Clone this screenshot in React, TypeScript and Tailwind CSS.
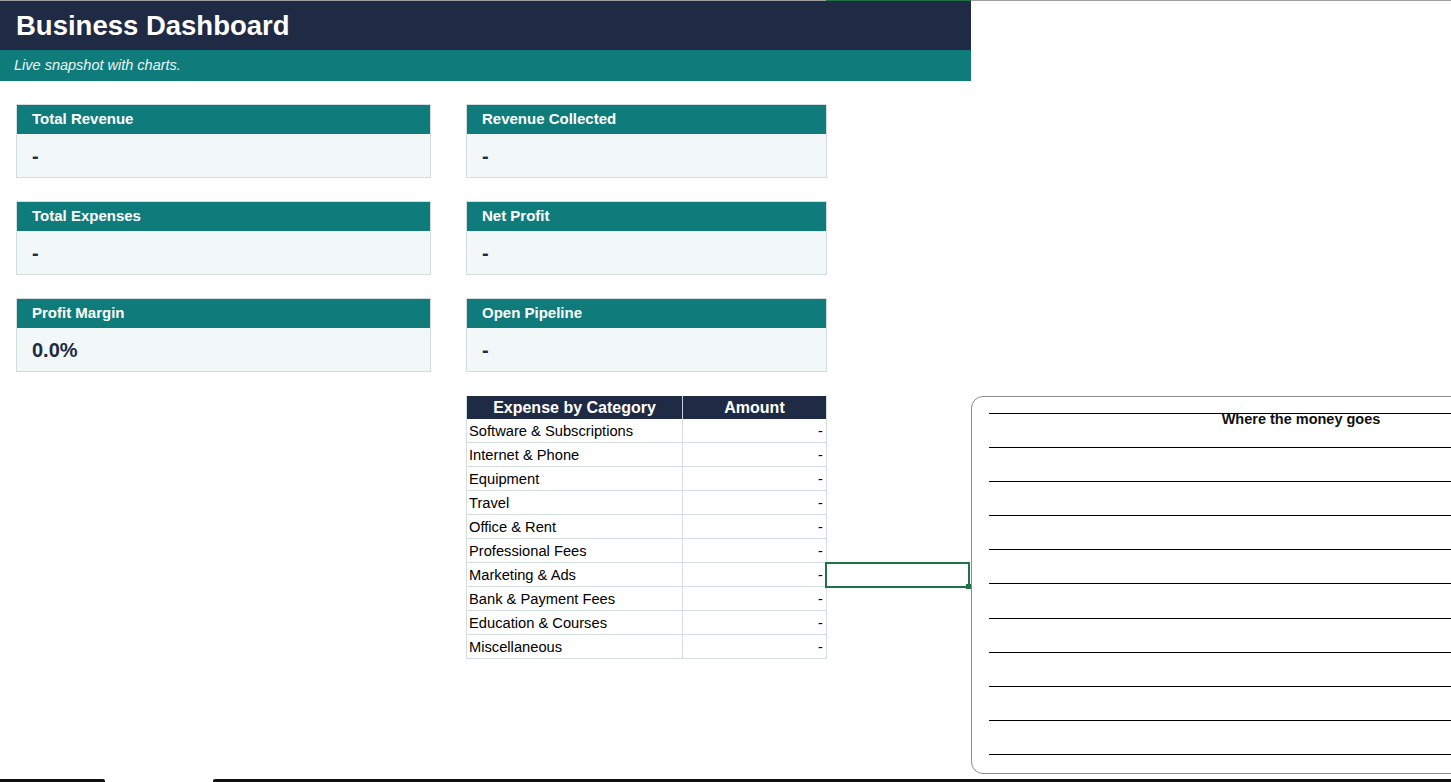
import React from "react";

const cards = [
  { label: "Total Revenue", value: "-" },
  { label: "Revenue Collected", value: "-" },
  { label: "Total Expenses", value: "-" },
  { label: "Net Profit", value: "-" },
  { label: "Profit Margin", value: "0.0%" },
  { label: "Open Pipeline", value: "-" },
];

const categories = [
  "Software & Subscriptions",
  "Internet & Phone",
  "Equipment",
  "Travel",
  "Office & Rent",
  "Professional Fees",
  "Marketing & Ads",
  "Bank & Payment Fees",
  "Education & Courses",
  "Miscellaneous",
];

const KpiCard = ({ label, value }: { label: string; value: string }) => {
  return (
    <div className="flex flex-col h-[74px] border border-[#d3dddd]">
      <div className="h-[29px] bg-[#0f7b7b] px-[15px] flex items-center text-white font-bold text-[15px]">
        {label}
      </div>
      <div className="flex-1 bg-[#f2f8f8] px-[15px] flex items-center text-[#1f2a44] font-bold text-[20px]">
        {value}
      </div>
    </div>
  );
};

const App: React.FC = () => {
  // 11 horizontal gridlines in the (empty) chart
  const gridLines = Array.from({ length: 11 });

  return (
    <div className="w-[1451px] h-[782px] overflow-hidden bg-white flex flex-col font-['Liberation_Sans',Arial,sans-serif]">
      {/* sheet top edge, selected column marked green */}
      <div className="flex h-px shrink-0">
        <div className="w-[826px] bg-[#a0a0a0]"></div>
        <div className="w-[145px] bg-[#217346]"></div>
        <div className="flex-1 bg-[#a0a0a0]"></div>
      </div>

      {/* banner */}
      <div className="w-[971px] shrink-0">
        <div className="h-[49px] bg-[#1f2a44] pl-[16px] flex items-center text-white font-bold text-[27.5px]">
          Business Dashboard
        </div>
        <div className="h-[31px] bg-[#0f7b7b] pl-[14px] pt-[1px] flex items-center text-[#eaf5f5] italic text-[14.5px]">
          Live snapshot with charts.
        </div>
      </div>

      <div className="pl-[16px] pt-[23px]">
        <div className="grid grid-cols-[415px_361px] gap-x-[35px] gap-y-[23px]">
          {cards.map((card) => (
            <KpiCard key={card.label} label={card.label} value={card.value} />
          ))}
        </div>

        <div className="flex items-start mt-[24px] pl-[450px]">
          {/* expense table */}
          <div className="w-[361px] shrink-0 border-x border-[#d4dede]">
            <div className="flex h-[23px] bg-[#1f2a44] text-white font-bold text-[16px]">
              <div className="w-[216px] border-r border-[#c8d0d8] pt-[1px] flex items-center justify-center">
                Expense by Category
              </div>
              <div className="flex-1 pt-[1px] flex items-center justify-center">Amount</div>
            </div>
            {categories.map((cat) => (
              <div
                key={cat}
                className="flex h-[24px] border-b border-[#d4dede] text-[14.7px] text-black"
              >
                <div className="w-[216px] border-r border-[#d4dede] pl-[2px] pt-[2px] flex items-center">
                  {cat}
                </div>
                <div className="flex-1 pr-[3px] pt-[2px] flex items-center justify-end">-</div>
              </div>
            ))}
          </div>

          {/* empty column with the active cell */}
          <div className="w-[144px] shrink-0">
            <div className="relative -ml-[2px] w-[145px] mt-[166px] h-[26px] border-2 border-[#217346]">
              <div className="absolute -right-[3px] -bottom-[3px] w-[5px] h-[5px] bg-[#217346]"></div>
            </div>
          </div>

          {/* chart placeholder */}
          <div className="relative w-[660px] h-[378px] shrink-0 border border-[#8c8c8c] rounded-[12px] pl-[17px] pt-[16px] flex flex-col gap-[33.1px]">
            {gridLines.map((_, i) => (
              <div key={i} className="h-px bg-black shrink-0"></div>
            ))}
            <div className="absolute left-0 right-0 top-[14px] text-center font-bold text-[14.5px] leading-[17px] text-[#111]">
              Where the money goes
            </div>
          </div>
        </div>
      </div>

      {/* edge of the shapes below */}
      <div className="flex h-[3px] mt-auto shrink-0">
        <div className="w-[105px] bg-[#111] rounded-tr-[2px]"></div>
        <div className="w-[108px]"></div>
        <div className="flex-1 bg-[#111] rounded-tl-[2px]"></div>
      </div>
    </div>
  );
};

export default App;
